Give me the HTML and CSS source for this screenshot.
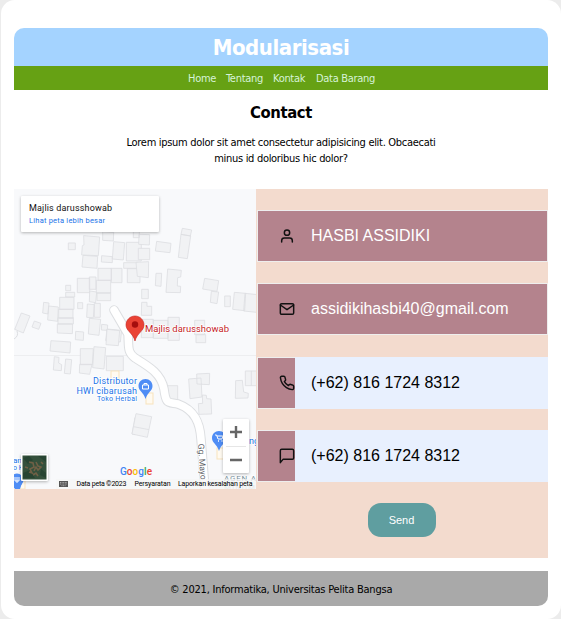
FILE: index.html
```html
<!DOCTYPE html>
<html lang="id">
<head>
<meta charset="utf-8">
<title>Modularisasi</title>
<link rel="stylesheet" href="styles.css">
</head>
<body>
<div class="container">
  <header class="header"><h1>Modularisasi</h1></header>
  <nav class="nav"><a class="home">Home</a><a class="tentang">Tentang</a><a class="kontak">Kontak</a><a class="barang">Data Barang</a></nav>
  <section class="intro">
    <h2>Contact</h2>
    <p><span class="line1">Lorem ipsum dolor sit amet consectetur adipisicing elit. Obcaecati</span><br><span class="line2">minus id doloribus hic dolor?</span></p>
  </section>
  <main class="row">
    <svg class="map" width="242" height="300" viewBox="0 0 242 300">
      <rect width="242" height="300" fill="#f8f9fb"/>
      <path d="M0 166.5H242" stroke="#edeef0"/>
      <g class="bld" transform="translate(-4 -4) scale(.33333)">
        <path d="M221 152l48 4-4 56-50-2 2-28 5-2zM219 211l44 3-2 36-45-4zM175 174h21v20h-21zM278 140l33 2-1 26-32-2zM311 170l33 3-4 52-33-3zM349 172h45v56h-45zM275 212l32 3v18l-33-2zM341 233h44v17h-44zM264 250h40v36h-40zM304 250h32v43h-32zM352 251h38v42h-38zM202 280h37v43h-37zM238 276h20v37h-20zM259 286h43v38h-43zM239 318l21 3-3 32-19-3zM261 324h41v23h-41zM167 301h15v16h-15zM167 322h27v14h-27zM149 337h43v36h-43zM146 373h43v27h-43zM144 398h46v19h-46zM142 417h46l-1 29-45-2zM101 352l16 2-3 33-16-3zM116 363l29 3-2 43-30-4zM203 353h15v18h-15zM232 357l21 2-3 39-20-1zM253 355h18v42h-18zM238 400l34 3-5 48-32-4zM275 418l18 2-1 16-18-1zM197 439l24 2-1 25-24-2zM291 432l44 4-4 35-44-4zM34 384l26 9-20 51-26-11zM73 408l20 7-7 18-20-7z"/>
      </g>
      <g class="bld" transform="translate(116 -4) scale(.33333)">
        <path d="M10 138h18v20h-18zM27 148l32 1-1 31-32-2zM25 190h34v34h-34zM18 232l38-2-1 48-33-4zM80 169l43 6-3 28-44-5zM157 130l28 5-4 18-28-5zM153 148l29 5-10 68-27-4zM78 265h17l-2 39-17-2zM113 252l41 4-2 20-9 2-1 25 10 1-1 19-43-1zM35 313h20v28h-20zM35 352h16v12h14v27h-31zM224 280l42 7-5 32-43-7zM244 319l22 2-5 35-20-4zM284 333h17v32h-17zM313 322l34 3-3 52-36-4zM345 325l38 4-3 53-39-4zM34 403h36v55h-36zM70 406h44v54h-44zM114 397h34v69h-34zM194 406h30v43h-30zM198 449h29v24h-29z"/>
      </g>
      <g class="bld" transform="translate(-4 146) scale(.33333)">
        <path d="M123 17l59 4-2 33-60-6zM211 41h39l-3 48h-36zM209 88h37l-7 30-31-4zM252 35l35 3-5 64-34-4zM289 64h51v43h-51zM133 65l14 2-1 17 9 5-1 18-24-2zM167 72l18 2-4 43-18-2zM291-17l38 4-4 45-37-3zM375 248l-9 49 9 2z"/>
      </g>
      <g class="bld" transform="translate(116 146) scale(.33333)">
        <path d="M112 152h31v50h-31zM18 236l47 9-13 62-46-10zM11 275l46 9M176 132l37-3 3 57-36 5zM200 117l39-2-1 34-37-2zM217 180l12 1 1 10 13 1 2 45-38 1-2-32 13-1zM317 137l20-1 4 35 14 4-1 14-38 1zM346 108h36v44h-36zM364 108v44"/>
      </g>
      <g fill="#fffaf0" stroke="#f7e3bd" stroke-width="1">
        <rect x="97" y="182" width="8" height="12"/><rect x="132" y="204" width="7" height="11"/><rect x="203" y="259" width="8" height="11"/><path d="M11 286v14H5"/>
      </g>
      <path d="M100 121L114 145C115 158 113 163 121 169C134 177 147 184 150 200C152 216 154 213 164 215C181 221 186 234 187 250L191 300" fill="none" stroke="#dcdee1" stroke-width="9.5" stroke-linecap="round" stroke-linejoin="round"/>
      <path d="M100 121L114 145C115 158 113 163 121 169C134 177 147 184 150 200C152 216 154 213 164 215C181 221 186 234 187 250L191 300" fill="none" stroke="#fff" stroke-width="7.5" stroke-linecap="round" stroke-linejoin="round"/>
      <path d="M0 150q5-3 3-8" fill="none" stroke="#dcdee1"/>
      <path d="M121 127c-5 0-9 4-9 9 0 6 7 8 9 16 2-8 9-10 9-16 0-5-4-9-9-9z" fill="#ea4335" stroke="#c5221f" stroke-width=".6"/>
      <circle cx="121" cy="135.500" r="3.200" fill="#a50e0e"/>
      <g class="rb halo">
        <text x="131" y="143" font-size="9.500" textLength="84" fill="#c5221f">Majlis darusshowab</text>
        <g fill="#1a73e8">
          <text x="79" y="195" font-size="9" textLength="44">Distributor</text>
          <text x="62.500" y="204.500" font-size="9" textLength="60.500">HWI cibarusah</text>
          <text x="83" y="212" font-size="7" textLength="40">Toko Herbal</text>
          <text x="-1" y="274" font-size="8">an</text><text x="-1" y="281" font-size="7">o K</text>
          <text x="235" y="255" font-size="9">ng</text>
        </g>
        <text transform="translate(184 255) rotate(86)" font-size="8.500" textLength="36" fill="#5f6368">Gg. Mayo</text>
        <text x="210" y="292" font-size="8" textLength="32" fill="#78909c">AGEN A</text>
        <text x="210" y="301" font-size="8" textLength="31" fill="#b3bec4">MINUM</text>
      </g>
      <g fill="#4f8df5">
        <path d="M131.500 190c-4 0-7 3-7 7 0 5 5 6 7 13 2-7 7-8 7-13 0-4-3-7-7-7z"/>
        <path d="M205 242c-4 0-7 3-7 7 0 5 5 6 7 13 2-7 7-8 7-13 0-4-3-7-7-7z"/>
        <circle cx="3" cy="291" r="6.500"/><path d="M-3 294l4 6h5l2-6z"/>
      </g>
      <path d="M128.500 196h6v4h-6zM130 196v-1.500h3V196M201 246h1.500l1.500 4h4l1-3h-6M1 288v4h4v-4M3 288v6" fill="none" stroke="#fff" stroke-width="1"/>
      <path d="M204 252h1M207.500 252h1" stroke="#fff" stroke-width="1.500"/>
      <g class="rb" font-weight="500"><text x="106" y="286" textLength="32" font-size="10"><tspan fill="#4285f4">G</tspan><tspan fill="#ea4335">o</tspan><tspan fill="#fbbc04">o</tspan><tspan fill="#4285f4">g</tspan><tspan fill="#34a853">l</tspan><tspan fill="#ea4335">e</tspan></text></g>
      <rect x="42" y="290" width="200" height="10" fill="#f5f5f5" opacity=".75"/>
      <path d="M45 292h9v6h-9z" fill="#555"/><path d="M46 293.500h7M46 295h7M47.500 296.700h4" stroke="#ddd" stroke-width=".6" stroke-dasharray="1 .6"/>
      <g class="rb" font-size="7" fill="#000"><text x="62.500" y="297" textLength="50">Data peta ©2023</text><text x="120.500" y="297" textLength="36">Persyaratan</text><text x="164" y="297" textLength="74.500">Laporkan kesalahan peta</text></g>
      <g class="shadow"><rect x="7" y="7" width="138" height="36" rx="1" fill="#fff"/><rect x="209" y="230" width="26" height="54" rx="1" fill="#fff"/><rect x="7" y="265" width="27" height="27" rx="1" fill="#fff"/></g>
      <g class="rb"><text x="15" y="22" font-size="9" textLength="83" fill="#111">Majlis darusshowab</text><text x="15" y="34" font-size="7.500" textLength="76" fill="#1a73e8">Lihat peta lebih besar</text></g>
      <path d="M222 237v12M216 243h12M216 271h12" stroke="#666" stroke-width="2.400"/>
      <path d="M212 257.500h20" stroke="#e6e6e6"/>
      <rect x="8.500" y="266.500" width="24" height="24" fill="#34503b"/>
      <path d="M9 269l6-2 4 4-5 4zM24 267h8v6zM9 284l7-3 5 8H9zM27 280l5 4v5l-6-3z" fill="#274432"/>
      <path d="M15 273l4 1 1 4-4 2 2 4-3-1M22 273l2 4 3 1-3 3-2-3-2 4M11 278l3 1M19 286l3-2 2 3M27 273l2 2" fill="none" stroke="#806449" stroke-width="1.600" opacity=".8"/>
    </svg>
    <form class="form">
      <div class="field"><svg class="icon" viewBox="0 0 24 24"><path d="M20 21v-2a4 4 0 0 0-4-4H8a4 4 0 0 0-4 4v2"/><circle cx="12" cy="7" r="4"/></svg><div class="input">HASBI ASSIDIKI</div></div>
      <div class="field"><svg class="icon" viewBox="0 0 24 24"><rect x="2" y="4" width="20" height="16" rx="2"/><path d="M22 6l-10 7L2 6"/></svg><div class="input">assidikihasbi40@gmail.com</div></div>
      <div class="field"><svg class="icon" viewBox="0 0 24 24"><path d="M22 16.920v3a2 2 0 0 1-2.180 2 19.790 19.790 0 0 1-8.630-3.070 19.500 19.500 0 0 1-6-6 19.790 19.790 0 0 1-3.070-8.670A2 2 0 0 1 4.110 2h3a2 2 0 0 1 2 1.720 12.840 12.840 0 0 0 .7 2.810 2 2 0 0 1-.45 2.110L8.090 9.910a16 16 0 0 0 6 6l1.270-1.270a2 2 0 0 1 2.110-.45 12.840 12.840 0 0 0 2.810.7A2 2 0 0 1 22 16.920z"/></svg><div class="input filled">(+62) 816 1724 8312</div></div>
      <div class="field"><svg class="icon" viewBox="0 0 24 24"><path d="M22 15a2 2 0 0 1-2 2H6l-4 5V4a2 2 0 0 1 2-2h16a2 2 0 0 1 2 2z"/></svg><div class="input filled">(+62) 816 1724 8312</div></div>
      <button class="send" type="button">Send</button>
    </form>
  </main>
  <footer class="footer"><span>© 2021, Informatika, Universitas Pelita Bangsa</span></footer>
</div>
</body>
</html>
```
FILE: styles.css
```css
* { box-sizing: border-box; }
body {
  margin: 0;
  padding-left: 1px;
  background: #ececec;
  font-family: "DejaVu Sans Condensed", "DejaVu Sans", sans-serif;
  font-stretch: condensed;
  font-size: 11px;
  color: #000;
}
.container {
  height: 619px;
  padding: 28px 13px 13px;
  border-radius: 14px;
  background: #fff;
}
.header {
  height: 38px;
  border-radius: 10px 10px 0 0;
  background: #a4d3ff;
  text-align: center;
}
h1 { margin: 0; font-size: 22px; line-height: 40px; color: #fff; letter-spacing: -0.45px; }
.nav {
  display: flex;
  justify-content: center;
  gap: 10px;
  height: 24px;
  background: #66a114;
  color: #d6f3d8;
  line-height: 25px;
  letter-spacing: -0.3px;
  white-space: nowrap;
}
.home { width: 28px; }
.tentang { width: 37px; }
.kontak { width: 33px; }
.barang { width: 58px; }
.intro { height: 99px; padding-top: 11px; text-align: center; }
h2 { margin: 0; font-size: 16.5px; line-height: 24px; letter-spacing: -0.4px; }
p { margin: 10px 0 0; line-height: 16px; letter-spacing: -0.3px; white-space: nowrap; }
.row { display: flex; height: 369px; background: #f3dbce; }
.map { display: block; flex: none; overflow: hidden; }
.bld { fill: #f1f2f4; stroke: #dddfe2; stroke-width: 2.5; }
.rb { font-family: Roboto, sans-serif; font-stretch: normal; }
.halo text { paint-order: stroke; stroke: #fff; stroke-width: 1.5px; }
.shadow { filter: drop-shadow(0 1px 1.500px rgba(0, 0, 0, .28)); }
.form {
  display: flex;
  flex: 1;
  flex-direction: column;
  align-items: center;
  gap: 21.330px;
  padding: 21px 0 0 1px;
}
.field {
  display: flex;
  align-items: center;
  flex: none;
  width: 100%;
  height: 52px;
  padding-left: 21px;
  border: 1px solid #eee;
  background: #b4838d;
}
.icon { flex: none; width: 16px; height: 16px; fill: none; stroke: #111; stroke-width: 2.200; stroke-linecap: round; stroke-linejoin: round; }
.input {
  flex: 1;
  height: 52px;
  margin: -1px -1px -1px 0;
  padding-left: 16px;
  font: 16px/52px "Liberation Sans", Arial, sans-serif;
  color: #fff;
}
.input:not(.filled) { height: 50px; margin: 0; line-height: 50px; }
.filled { background: #e8f0fe; color: #000; }
.send {
  width: 68px;
  height: 34px;
  margin-right: 2px;
  padding: 0;
  border: 0;
  border-radius: 13px;
  background: #5f9ea0;
  color: #fff;
  font: 11px "Liberation Sans", Arial, sans-serif;
}
.footer {
  height: 35px;
  margin-top: 13px;
  border-radius: 0 0 10px 10px;
  background: #a9a9a9;
  line-height: 37px;
  letter-spacing: -0.22px;
  text-align: center;
}
```
